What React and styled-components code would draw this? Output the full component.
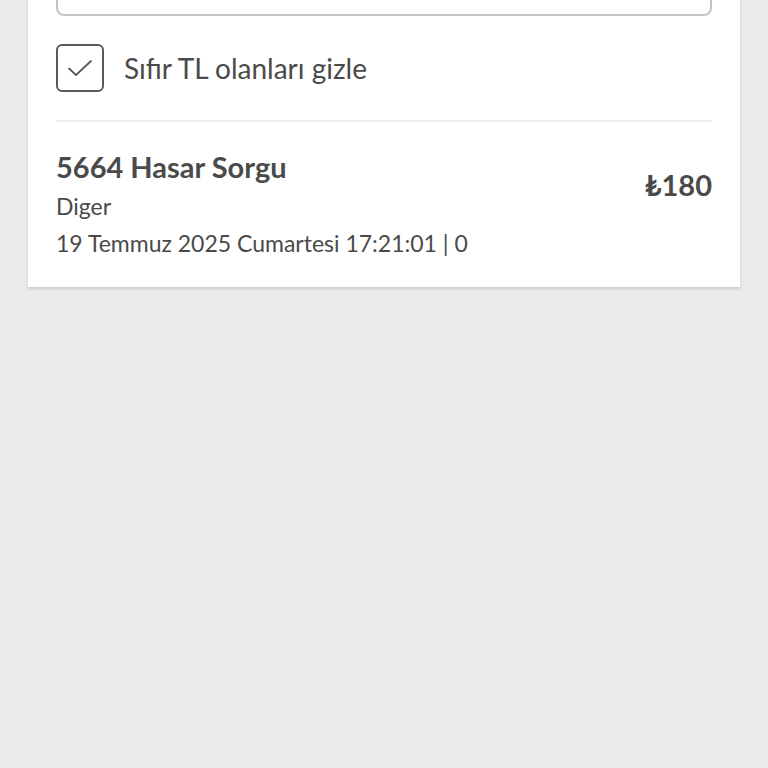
import React, { useState } from 'react';
import styled, { createGlobalStyle } from 'styled-components';

const GlobalStyle = createGlobalStyle`
  html, body {
    margin: 0;
    padding: 0;
    background: #ebebeb;
    font-family: Lato, "Noto Sans", sans-serif;
    color: #4a4a4a;
  }
`;

const Page = styled.div`
  min-height: 768px;
  background: #ebebeb;
  padding: 0 28px;
  overflow: hidden;
`;

const Card = styled.section`
  margin-top: -44px;
  background: #fff;
  box-shadow: 0 2px 3px rgba(0, 0, 0, 0.14);
  padding: 0 28px;
`;

const SearchField = styled.input`
  display: block;
  box-sizing: border-box;
  width: 100%;
  height: 60px;
  border: 2px solid #c4c4c4;
  border-radius: 8px;
  background: #fff;
  outline: none;
`;

const FilterRow = styled.label`
  display: flex;
  align-items: center;
  gap: 20px;
  height: 104px;
  border-bottom: 2px solid #ececec;
  cursor: pointer;
`;

const Box = styled.span`
  display: flex;
  align-items: center;
  justify-content: center;
  box-sizing: border-box;
  width: 48px;
  height: 48px;
  border: 2px solid #5a5a5a;
  border-radius: 6px;
`;

const FilterText = styled.span`
  font-size: 28px;
  color: #4a4a4a;
`;

const Item = styled.div`
  display: flex;
  align-items: flex-start;
  justify-content: space-between;
  padding: 24px 0 25px;
`;

const Info = styled.div`
  display: flex;
  flex-direction: column;
`;

const Title = styled.div`
  font-size: 29px;
  font-weight: 700;
  line-height: 42px;
  color: #4a4a4a;
`;

const Meta = styled.div`
  font-size: 23px;
  line-height: 37px;
  color: #4a4a4a;
`;

const Amount = styled.div`
  margin-top: 19px;
  font-size: 29px;
  font-weight: 700;
  line-height: 39px;
  color: #4a4a4a;
`;

export default function App() {
  const [hideZero, setHideZero] = useState(true);
  return (
    <Page>
      <GlobalStyle />
      <Card>
        <SearchField type="text" aria-label="Ara" />
        <FilterRow onClick={() => setHideZero(!hideZero)}>
          <Box>
            {hideZero && (
              <svg width="26" height="20" viewBox="0 0 26 20" fill="none">
                <path d="M2 10.5 L9 17 L24 3" stroke="#5a5a5a" strokeWidth="1.8" strokeLinecap="round" strokeLinejoin="round" />
              </svg>
            )}
          </Box>
          <FilterText>Sıfır TL olanları gizle</FilterText>
        </FilterRow>
        <Item>
          <Info>
            <Title>5664 Hasar Sorgu</Title>
            <Meta>Diger</Meta>
            <Meta>19 Temmuz 2025 Cumartesi 17:21:01 | 0</Meta>
          </Info>
          <Amount>₺180</Amount>
        </Item>
      </Card>
    </Page>
  );
}
